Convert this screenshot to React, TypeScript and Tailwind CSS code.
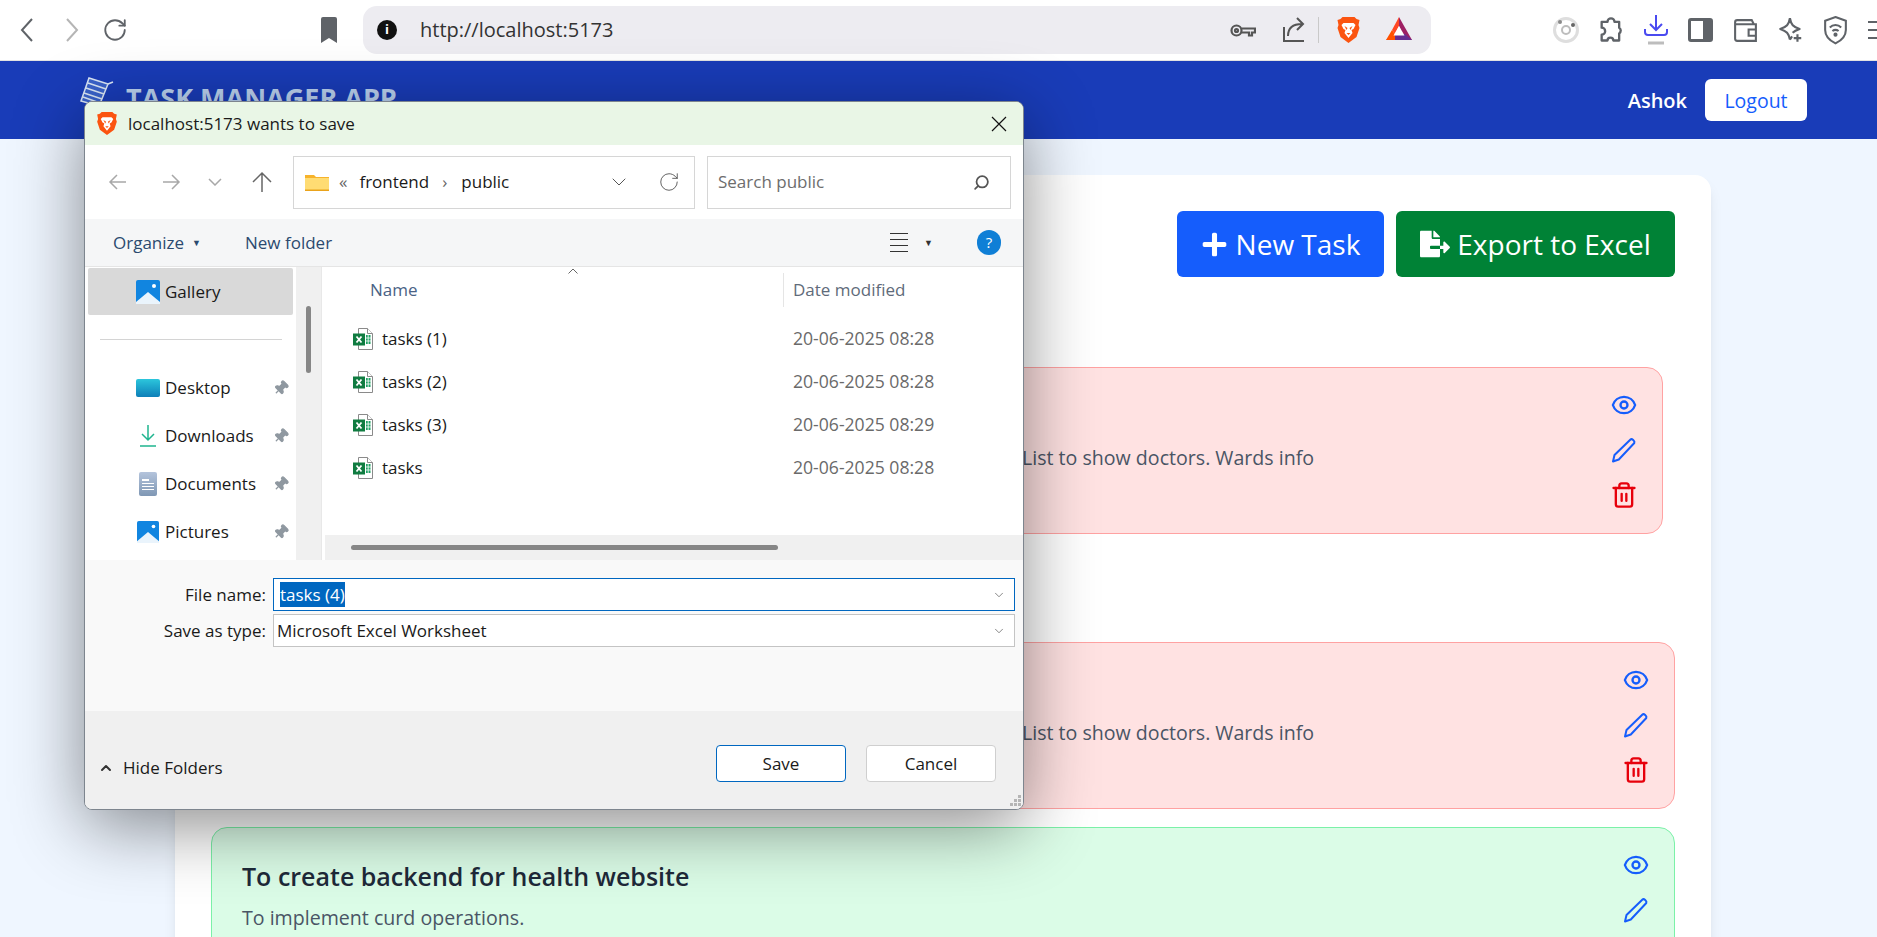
import { ReactNode } from 'react';
import { ChevronDown, ChevronUp, Pin, RotateCw, Search, Trash2 } from 'lucide-react';
import { FaFileExport, FaPlus } from 'react-icons/fa';
import { HiOutlineEye } from 'react-icons/hi';

const sans = 'font-["Open_Sans",sans-serif]';

function BraveIcon({ className }: { className: string }) {
  return (
    <svg viewBox="0 0 24 28" className={className}>
      <path d="M6 1h12l2 2 3 1-1 5 1 3-3 9-8 6-8-6-3-9 1-3-1-5 3-1z" fill="#fb5410" />
      <path d="M7 7h10l2 2-2 4-2 1 1 3-4 5-4-5 1-3-2-1-2-4z" fill="#fff" />
      <path d="M8 10l3 2-1 2zM16 10l-3 2 1 2zM10 17h4l-2 2z" fill="#fb5410" />
    </svg>
  );
}

function BatIcon() {
  return (
    <svg viewBox="0 0 28 28" className="w-[28px] h-[28px]">
      <path d="M14 1L7 14l3 4 4-8z" fill="#ff4724" />
      <path d="M14 1l13 23h-7l-6-14z" fill="#9e1f63" />
      <path d="M1 24h26l-7-6H10z" fill="#662d91" />
      <path d="M7 14L1 24h9l0-6z" fill="#ff5000" />
      <path d="M14 10l5.500 9.500H8.500z" fill="#fff" />
    </svg>
  );
}

function ExcelIcon() {
  return (
    <svg viewBox="0 0 20 22" className="w-[20px] h-[22px] shrink-0">
      <path d="M5.500.5h9l5 5v16h-14z" fill="#fff" stroke="#8a8a8a" />
      <path d="M14.500.5v5h5" fill="#fff" stroke="#8a8a8a" />
      <rect x="13" y="7" width="4.500" height="9" fill="#21a366" />
      <path d="M13 10h5M13 13h5M15.200 7v9" stroke="#fff" strokeWidth="0.8" />
      <rect x="0" y="5.500" width="12" height="12" fill="#107c41" />
      <path d="M3.500 8.500l5 6M8.500 8.500l-5 6" stroke="#fff" strokeWidth="1.800" />
    </svg>
  );
}

function PencilIcon() {
  return (
    <svg viewBox="0 0 26 26" className="w-[26px] h-[26px]" fill="none" stroke="#155dfc" strokeWidth="2" strokeLinejoin="round">
      <path d="M2 24.500l1.500-6.500L19.500 2.500c1.300-1.200 4.700 1.200 3.800 3.500L7.800 22.500z" />
    </svg>
  );
}

function PictureIcon({ className }: { className: string }) {
  return (
    <svg viewBox="0 0 24 24" className={className}>
      <rect width="24" height="24" rx="2" fill="#1185e0" />
      <path d="M0 22l12-10 12 10v2H0z" fill="#eaf4fc" />
      <circle cx="18" cy="6" r="2" fill="#fff" />
    </svg>
  );
}

function NavItem({ icon, label }: { icon: ReactNode; label: string }) {
  return (
    <div className="h-[48px] flex items-center pl-[51px] pr-[7px]">
      <div className="w-[24px] flex justify-center">{icon}</div>
      <span className="ml-[5px] text-[#1a1a1a]">{label}</span>
      <Pin className="ml-auto w-[16px] h-[16px] text-[#8f98a0] rotate-45" fill="#8f98a0" />
    </div>
  );
}

function FileRow({ name, date }: { name: string; date: string }) {
  return (
    <div className="h-[43px] flex items-center">
      <div className="w-[468px] pl-[28px] flex items-center gap-[9px] text-[#1a1a1a]">
        <ExcelIcon />
        <span>{name}</span>
      </div>
      <span className="text-[#6a6a6a] text-[17.600px]">{date}</span>
    </div>
  );
}

function SaveDialog() {
  return (
    <div className={`absolute left-[84px] top-[101px] w-[940px] h-[709px] rounded-[8px] border border-[#7d858e] overflow-hidden bg-white text-[17px] shadow-[0_16px_70px_rgba(0,0,0,0.45)] ${sans}`}>
      <div className="h-[43px] bg-[#e9f6e6] flex items-center pl-[11px] pr-[16px]">
        <BraveIcon className="w-[22px] h-[25px]" />
        <span className="ml-[10px] text-[#1a1a1a]">localhost:5173 wants to save</span>
        <svg viewBox="0 0 16 16" className="ml-auto w-[16px] h-[16px]" stroke="#111" strokeWidth="1.200">
          <path d="M1 1l14 14M15 1L1 15" />
        </svg>
      </div>

      <div className="h-[74px] flex items-center pl-[23px] text-[#555]">
        <svg viewBox="0 0 20 20" className="w-[20px] h-[20px]" fill="none" stroke="#a8a8a8" strokeWidth="1.500">
          <path d="M18 10H2M9 3l-7 7 7 7" />
        </svg>
        <svg viewBox="0 0 20 20" className="ml-[33px] w-[20px] h-[20px]" fill="none" stroke="#a8a8a8" strokeWidth="1.500">
          <path d="M2 10h16M11 3l7 7-7 7" />
        </svg>
        <svg viewBox="0 0 14 8" className="ml-[27px] w-[14px] h-[8px]" fill="none" stroke="#a8a8a8" strokeWidth="1.500">
          <path d="M1 1l6 6 6-6" />
        </svg>
        <svg viewBox="0 0 20 22" className="ml-[30px] w-[20px] h-[22px]" fill="none" stroke="#666" strokeWidth="1.500">
          <path d="M10 21V2M1 11l9-9 9 9" />
        </svg>
        <div className="ml-[21px] w-[402px] h-[53px] border border-[#d6d6d6] flex items-center pl-[11px] text-[#1a1a1a]">
          <svg viewBox="0 0 24 18" className="w-[24px] h-[18px] shrink-0">
            <path d="M0 2h9l2 2h13v14H0z" fill="#f7b32b" />
            <path d="M0 5h24v12H0z" fill="#ffdc73" />
            <path d="M0 16.500h24V18H0z" fill="#eaa31b" />
          </svg>
          <span className="ml-[10px] text-[#666]">«</span>
          <span className="ml-[12px]">frontend</span>
          <span className="ml-[13px] text-[#666]">›</span>
          <span className="ml-[14px]">public</span>
          <ChevronDown className="ml-auto w-[24px] h-[24px] text-[#555]" strokeWidth={1} />
          <RotateCw className="ml-[27px] mr-[14px] w-[22px] h-[22px] text-[#555]" strokeWidth={1} />
        </div>
        <div className="ml-[12px] w-[304px] h-[53px] border border-[#d6d6d6] flex items-center pl-[10px] pr-[20px] text-[#6d6d6d]">
          <span>Search public</span>
          <Search className="ml-auto w-[17px] h-[17px] -scale-x-100 text-[#555]" strokeWidth={2.500} />
        </div>
      </div>

      <div className="h-[48px] bg-[#f5f6f7] border-b border-[#e5e5e5] flex items-center pl-[28px] text-[#2b4a6f]">
        <span>Organize</span>
        <span className="ml-[8px] text-[9px]">▼</span>
        <span className="ml-[44px]">New folder</span>
        <div className="ml-auto flex flex-col gap-[5px]">
          <div className="w-[18px] h-[1px] bg-[#333]" />
          <div className="w-[18px] h-[1px] bg-[#333]" />
          <div className="w-[18px] h-[1px] bg-[#333]" />
          <div className="w-[18px] h-[1px] bg-[#333]" />
        </div>
        <span className="ml-[16px] text-[9px] text-[#333]">▼</span>
        <div className="ml-[44px] mr-[22px] w-[24px] h-[25px] rounded-full bg-[#0f7fd6] text-white text-[15px] flex items-center justify-center">?</div>
      </div>

      <div className="h-[293px] flex">
        <div className="w-[211px] shrink-0">
          <div className="mx-[3px] mt-px h-[47px] rounded-[2px] bg-[#d9d9d9] flex items-center pl-[48px]">
            <PictureIcon className="w-[24px] h-[24px]" />
            <span className="ml-[5px] text-[#1a1a1a]">Gallery</span>
          </div>
          <div className="mt-[24px] mb-[24px] ml-[15px] w-[182px] h-px bg-[#d4d4d4]" />
          <NavItem
            label="Desktop"
            icon={<div className="w-[24px] h-[18px] rounded-[2px] bg-gradient-to-b from-[#2cc6dc] to-[#0f7fb8]" />}
          />
          <NavItem
            label="Downloads"
            icon={
              <svg viewBox="0 0 16 22" className="w-[16px] h-[22px]" fill="none" stroke="#1fb58f" strokeWidth="1.500">
                <path d="M8 0v15M2 9l6 6 6-6M0 21h16" />
              </svg>
            }
          />
          <NavItem
            label="Documents"
            icon={
              <div className="w-[18px] h-[24px] rounded-[2px] bg-gradient-to-b from-[#b4c4dc] to-[#7f97b4] flex flex-col justify-center gap-[2px] px-[3px]">
                <div className="w-[7px] h-[2px] bg-white" />
                <div className="h-px bg-white" />
                <div className="h-px bg-white" />
                <div className="h-px bg-white" />
              </div>
            }
          />
          <NavItem label="Pictures" icon={<PictureIcon className="w-[22px] h-[22px]" />} />
        </div>
        <div className="w-[25px] shrink-0 bg-[#f0f0f0] pt-[39px] pl-[10px]">
          <div className="w-[5px] h-[67px] rounded-full bg-[#868686]" />
        </div>
        <div className="w-[4px] shrink-0 border-l border-[#e8e8e8]" />
        <div className="flex-1 relative flex flex-col">
          <div className="h-[46px] flex items-center relative">
            <span className="pl-[45px] w-[458px] text-[#4a6285]">Name</span>
            <div className="h-[34px] border-l border-[#e5e5e5] pl-[9px] flex items-center text-[#5f6b7a]">Date modified</div>
            <svg viewBox="0 0 10 6" className="absolute left-[243px] top-[1px] w-[10px] h-[6px]" fill="none" stroke="#666">
              <path d="M.5 5.500L5 1l4.500 4.500" />
            </svg>
          </div>
          <div className="pt-[4px] flex-1">
            <FileRow name="tasks (1)" date="20-06-2025 08:28" />
            <FileRow name="tasks (2)" date="20-06-2025 08:28" />
            <FileRow name="tasks (3)" date="20-06-2025 08:29" />
            <FileRow name="tasks" date="20-06-2025 08:28" />
          </div>
          <div className="h-[25px] bg-[#f0f0f0] pt-[10px] pl-[26px]">
            <div className="w-[427px] h-[5px] rounded-full bg-[#868686]" />
          </div>
        </div>
      </div>

      <div className="h-[151px] bg-[#f9f9f9] pt-[18px] pr-[8px] flex flex-col gap-[3px]">
        <div className="flex items-center">
          <span className="w-[188px] pr-[7px] text-right text-[#1a1a1a]">File name:</span>
          <div className="flex-1 h-[33px] bg-white border border-[#0067c0] flex items-center pl-[6px] pr-[8px] text-white">
            <span className="bg-[#0067c0] leading-[25px]">tasks (4)</span>
            <ChevronDown className="ml-auto w-[14px] h-[14px] text-[#555]" strokeWidth={1.200} />
          </div>
        </div>
        <div className="flex items-center">
          <span className="w-[188px] pr-[7px] text-right text-[#1a1a1a]">Save as type:</span>
          <div className="flex-1 h-[33px] bg-white border border-[#c4c4c4] flex items-center pl-[3px] pr-[8px] text-[#1a1a1a]">
            <span>Microsoft Excel Worksheet</span>
            <ChevronDown className="ml-auto w-[14px] h-[14px] text-[#555]" strokeWidth={1.200} />
          </div>
        </div>
      </div>

      <div className="relative h-[98px] bg-[#f0f0f0] flex pl-[13px] pr-[27px] pt-[34px]">
        <div className="h-[37px] flex items-center text-[#1a1a1a] mt-[4px]">
          <ChevronUp className="w-[16px] h-[16px] text-[#333]" strokeWidth={3} />
          <span className="ml-[9px]">Hide Folders</span>
        </div>
        <button className="ml-auto w-[130px] h-[37px] rounded-[4px] bg-white border border-[#0067c0] text-[#1a1a1a]">Save</button>
        <button className="ml-[20px] w-[130px] h-[37px] rounded-[4px] bg-white border border-[#cfcfcf] text-[#1a1a1a]">Cancel</button>
        <svg viewBox="0 0 12 12" className="absolute right-[1px] bottom-[2px] w-[12px] h-[12px]" fill="#b5b5b5">
          <path d="M8 0h3v3H8zM4 4h3v3H4zM8 4h3v3H8zM0 8h3v3H0zM4 8h3v3H4zM8 8h3v3H8z" />
        </svg>
      </div>
    </div>
  );
}

function TaskCard({
  title,
  body,
  tone,
  hiddenIndent,
  className,
}: {
  title?: string;
  body: string;
  tone: 'red' | 'green';
  hiddenIndent?: boolean;
  className?: string;
}) {
  const colors = tone === 'red' ? 'bg-red-100 border-red-300' : 'bg-green-100 border-green-300';
  return (
    <div className={`h-[167px] shrink-0 rounded-2xl border ${colors} pl-[30px] pr-[24px] pt-[23px] flex justify-between ${className ?? ''}`}>
      <div className="pt-[9px]">
        <h3 className="h-[32px] text-[25px] leading-[32px] font-semibold text-gray-800">{title}</h3>
        <p className={`mt-[12px] text-[19.600px] leading-[28px] text-gray-600 ${hiddenIndent ? 'pl-[780px]' : ''}`}>{body}</p>
      </div>
      <div className="flex flex-col gap-[17px] items-center w-[28px]">
        <HiOutlineEye className="w-[28px] h-[28px] text-blue-600" />
        <div className="h-[28px] flex items-center"><PencilIcon /></div>
        <Trash2 className="w-[28px] h-[28px] text-red-600" strokeWidth={2} />
      </div>
    </div>
  );
}

function BrowserBar() {
  return (
    <div className={`h-[61px] bg-white border-b border-[#e2e2e2] flex items-center overflow-hidden *:shrink-0 ${sans}`}>
      <svg viewBox="0 0 14 24" className="ml-[20px] w-[14px] h-[24px]" fill="none" stroke="#5f6368" strokeWidth="2">
        <path d="M12 1L2 12l10 11" />
      </svg>
      <svg viewBox="0 0 14 24" className="ml-[31px] w-[14px] h-[24px]" fill="none" stroke="#b5b5b5" strokeWidth="2">
        <path d="M2 1l10 11L2 23" />
      </svg>
      <RotateCw className="ml-[23px] w-[26px] h-[26px] text-[#5f6368]" strokeWidth={1.700} />
      <svg viewBox="0 0 18 26" className="ml-[192px] w-[18px] h-[26px]">
        <path d="M1 2a2 2 0 0 1 2-2h12a2 2 0 0 1 2 2v24l-8-5-8 5z" fill="#5f6368" />
      </svg>
      <div className="ml-[25px] w-[1068px] h-[48px] rounded-[14px] bg-[#edecf1] flex items-center pl-[14px] pr-[18px]">
        <div className="w-[20px] h-[20px] rounded-full bg-[#111] text-white text-[13px] font-bold flex items-center justify-center">i</div>
        <span className="ml-[23px] text-[20px] text-[#333]">http://localhost:5173</span>
        <svg viewBox="0 0 26 16" className="ml-auto w-[26px] h-[17px]" fill="none" stroke="#555" strokeWidth="2.200">
          <circle cx="6.500" cy="8" r="5" />
          <circle cx="6.500" cy="8" r="1.500" />
          <path d="M11.500 6H25v4h-3v3h-3v-3h-7.500" />
        </svg>
        <svg viewBox="0 0 24 26" className="ml-[26px] w-[24px] h-[26px]" fill="none" stroke="#555" strokeWidth="2">
          <path d="M2 10v14h20M6 19c0-8 5-12 14-12M15 1l6 6-6 6" />
        </svg>
        <div className="ml-[12px] w-px h-[26px] bg-[#c9c9c9]" />
        <BraveIcon className="ml-[17px] w-[25px] h-[28px]" />
        <div className="ml-[24px]"><BatIcon /></div>
      </div>
      <div className="ml-[122px] w-[26px] h-[26px] rounded-full border-[3px] border-[#dedede] flex items-center justify-center relative">
        <div className="w-[10px] h-[10px] rounded-full border-2 border-[#bdbdbd]" />
        <div className="absolute left-[2px] top-[0px] w-[4px] h-[4px] rounded-full bg-[#8a8a8a]" />
        <div className="absolute right-[1px] top-[3px] w-[4px] h-[4px] rounded-full bg-[#666]" />
      </div>
      <svg viewBox="0 0 24 24" className="ml-[18px] w-[28px] h-[28px]" fill="none" stroke="#5f6368" strokeWidth="2" strokeLinejoin="round">
        <path d="M9 5a3 3 0 0 1 6 0h4v5a3 3 0 0 1 0 5v6h-5a2.500 2.500 0 0 0-5 0H4v-5a3 3 0 0 0 0-6V5z" />
      </svg>
      <svg viewBox="0 0 24 32" className="ml-[19px] w-[24px] h-[32px]" fill="none" strokeWidth="2">
        <path d="M12 1v14M6 10l6 6 6-6M1 15v3a3 3 0 0 0 3 3h16a3 3 0 0 0 3-3v-3" stroke="#4a4af0" />
        <path d="M4 29h16" stroke="#bdbdbd" strokeWidth="3" />
      </svg>
      <div className="ml-[20px] w-[25px] h-[24px] rounded-[3px] border-[3px] border-[#5f6368] flex justify-end">
        <div className="w-[7px] bg-[#5f6368]" />
      </div>
      <svg viewBox="0 0 26 26" className="ml-[19px] w-[27px] h-[27px]" fill="none" stroke="#5f6368" strokeWidth="2">
        <path d="M3 7V5a2 2 0 0 1 2-2h14l2 4M3 7h20v16H5a2 2 0 0 1-2-2V7zM23 12h-7v6h7" />
      </svg>
      <svg viewBox="0 0 26 26" className="ml-[18px] w-[28px] h-[28px]" fill="none" stroke="#5f6368" strokeWidth="2" strokeLinejoin="round">
        <path d="M12 2c1 6 3 8 9 10-3 1-5 2-6.500 3.500M12 22c-1-6-3-8-9-10 6-2 8-4 9-10M12 22l2-3" />
        <path d="M19 17v7M15.500 20.500h7" />
      </svg>
      <svg viewBox="0 0 24 28" className="ml-[18px] w-[25px] h-[29px]" fill="none" stroke="#5f6368" strokeWidth="2">
        <path d="M12 1l10 3.500v9c0 6-4 10-10 13-6-3-10-7-10-13v-9z" />
        <path d="M6.500 11c3-3 8-3 11 0M9 14.500c2-1.500 4-1.500 6 0" />
        <circle cx="12" cy="18" r="1" fill="#5f6368" />
      </svg>
      <div className="ml-[20px] w-[20px] flex flex-col gap-[6px]">
        <div className="h-[2px] bg-[#5f6368]" />
        <div className="h-[2px] bg-[#5f6368]" />
        <div className="h-[2px] bg-[#5f6368]" />
      </div>
    </div>
  );
}

export default function App() {
  return (
    <div className={`relative h-[937px] overflow-hidden bg-blue-50 ${sans}`}>
      <BrowserBar />

      <header className="h-[78px] bg-blue-800 flex items-center pl-[80px] pr-[70px]">
        <svg viewBox="0 0 34 30" className="w-[34px] h-[30px] -mt-[17px]" fill="none" stroke="#dbe7f7" strokeWidth="1.500">
          <path d="M9 1l19 6-9 22L1 24z" fill="#3a63cc" />
          <path d="M8 6l18 6M6 11l18 6M4 16l18 6M3 20l17 6M28 7l5-2" />
        </svg>
        <span className="ml-[12px] text-[27px] font-bold text-[#bcd3f1] -mt-[4px]">TASK MANAGER APP</span>
        <span className="ml-auto text-white font-semibold text-[20px] pt-[2px]">Ashok</span>
        <button className="ml-[18px] w-[102px] h-[42px] pt-[2px] rounded-[6px] bg-white text-blue-600 text-[19.500px]">Logout</button>
      </header>

      <main className="pl-[175px] pr-[166px] pt-[36px]">
        <div className="rounded-2xl bg-white shadow-lg p-[36px] flex flex-col h-[900px]">
          <div className="flex justify-end gap-[12px]">
            <button className="h-[66px] w-[207px] rounded-[6px] bg-blue-600 text-white text-[28px] flex items-center justify-center gap-[8px]">
              <FaPlus className="w-[27px] h-[27px]" />
              New Task
            </button>
            <button className="h-[66px] w-[279px] rounded-[6px] bg-green-700 text-white text-[28px] flex items-center justify-center gap-[7px]">
              <FaFileExport className="w-[30px] h-[28px]" />
              Export to Excel
            </button>
          </div>
          <TaskCard className="mt-[90px] mr-[12px]" tone="red" hiddenIndent body="List to show doctors. Wards info" />
          <TaskCard className="mt-[108px]" tone="red" hiddenIndent body="List to show doctors. Wards info" />
          <TaskCard
            className="mt-[18px]"
            tone="green"
            title="To create backend for health website"
            body="To implement curd operations."
          />
        </div>
      </main>

      <SaveDialog />
    </div>
  );
}
